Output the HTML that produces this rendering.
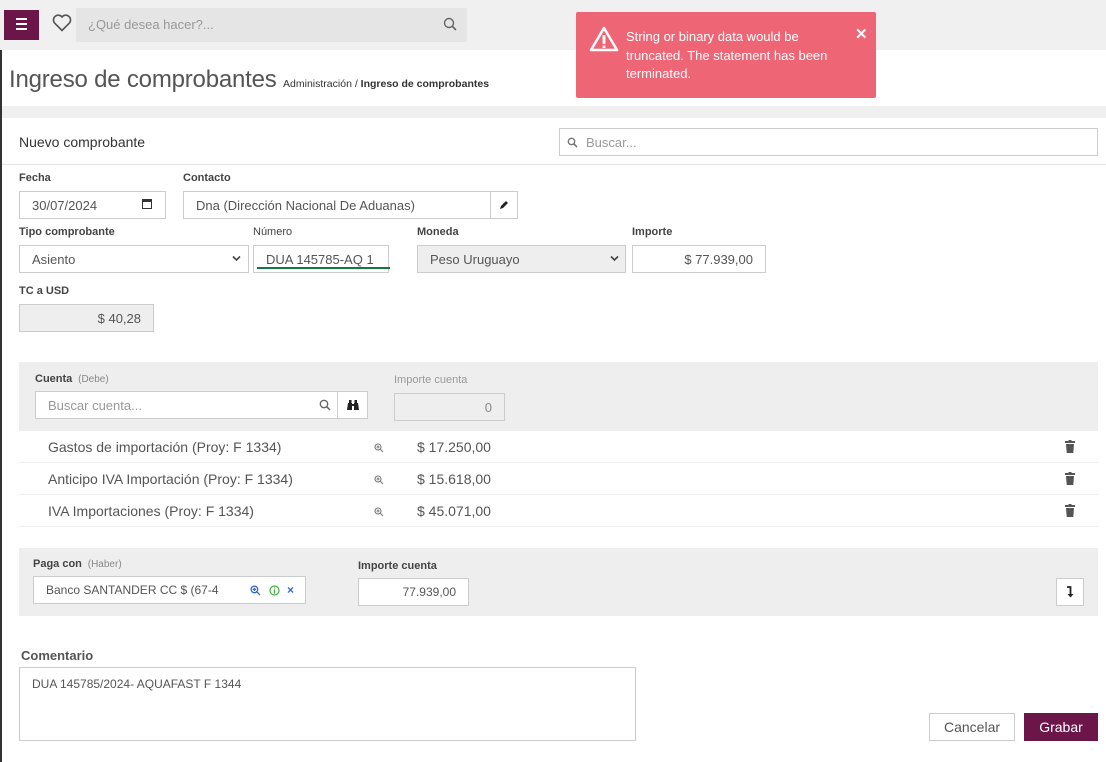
<!DOCTYPE html>
<html><head><meta charset="utf-8">
<style>
*{box-sizing:border-box;margin:0;padding:0}
body{width:1106px;height:762px;overflow:hidden;background:#fff;font-family:"Liberation Sans",sans-serif;color:#444;position:relative}
.a{position:absolute}
.lbl{position:absolute;font-size:11px;font-weight:bold;color:#444}
.inp{position:absolute;background:#fff;border:1px solid #ccc;font-size:13px;color:#555;display:flex;align-items:center;padding:0 12px}
.gray{background:#eee}
.row{position:absolute;left:19px;width:1079px;height:32px;background:#fff;border-bottom:1px solid #eee;font-size:14px;color:#555}
.row span{position:absolute;top:8px}
.trash{position:absolute;left:1046px;top:9px;width:10px;height:13px}
.zm{position:absolute;left:355px;top:12px}
</style></head><body>
<div class="a" style="left:0;top:0;width:1106px;height:50px;background:#f0f0f0"></div>
<div class="a" style="left:0;top:50px;width:2px;height:712px;background:#333"></div>
<div class="a" style="left:4px;top:10px;width:35px;height:30px;background:#6b1549"></div>
<div class="a" style="left:16px;top:18px;width:11px;height:2px;background:#fff;box-shadow:0 5px 0 #fff,0 10px 0 #fff"></div>
<svg class="a" style="left:52px;top:14px" width="20" height="18" viewBox="0 0 20 18"><path d="M10 16.5 L2.5 9 A4.5 4.5 0 0 1 10 3 A4.5 4.5 0 0 1 17.5 9 Z" fill="none" stroke="#555" stroke-width="1.6"/></svg>
<div class="a" style="left:76px;top:8px;width:391px;height:34px;background:#e5e5e5;font-size:13px;color:#999;padding:9px 0 0 12px">¿Qué desea hacer?...</div>
<svg class="a" style="left:443px;top:17px" width="15" height="15" viewBox="0 0 15 15"><circle cx="6" cy="6" r="4.5" fill="none" stroke="#666" stroke-width="1.4"/><path d="M9.5 9.5 L13 13" stroke="#666" stroke-width="1.6"/></svg>
<div class="a" style="left:9px;top:66px;font-size:24px;color:#555;white-space:nowrap;letter-spacing:-0.2px">Ingreso de comprobantes <span style="font-size:10.5px;color:#333;letter-spacing:0">Administración / <b>Ingreso de comprobantes</b></span></div>
<div class="a" style="left:2px;top:106px;width:1104px;height:12px;background:#f0f0f0"></div>

<div class="a" style="left:576px;top:12px;width:300px;height:86px;background:#ee6675;border-radius:2px;color:#fff;font-size:13px;line-height:18.5px;padding:16px 30px 0 50px">String or binary data would be truncated. The statement has been terminated.</div>
<svg class="a" style="left:589px;top:26px" width="30" height="26" viewBox="0 0 30 26"><path d="M15 2 L28 24 L2 24 Z" fill="none" stroke="#fff" stroke-width="2.5" stroke-linejoin="round"/><rect x="13.6" y="9" width="2.8" height="9" fill="#fff"/><rect x="13.6" y="19.5" width="2.8" height="2.5" fill="#fff"/></svg>
<div class="a" style="left:855px;top:25px;color:#fff;font-size:15px;font-weight:bold">✕</div>

<div class="a" style="left:19px;top:134px;font-size:14px;color:#333">Nuevo comprobante</div>
<div class="inp" style="left:559px;top:128px;width:539px;height:28px;color:#999;padding-left:26px">Buscar...</div>
<svg class="a" style="left:567px;top:137px" width="11" height="11" viewBox="0 0 11 11"><circle cx="4.5" cy="4.5" r="3.2" fill="none" stroke="#777" stroke-width="1.4"/><path d="M7 7 L10 10" stroke="#777" stroke-width="1.6"/></svg>
<div class="a" style="left:2px;top:164px;width:1104px;height:1px;background:#e5e5e5"></div>

<div class="lbl" style="left:19px;top:172px">Fecha</div>
<div class="inp" style="left:19px;top:191px;width:147px;height:28px">30/07/2024</div>
<div class="a" style="left:142px;top:199px;width:10px;height:10px;border:1.5px solid #333;border-top-width:3px"></div>
<div class="lbl" style="left:183px;top:172px">Contacto</div>
<div class="inp" style="left:183px;top:191px;width:308px;height:28px">Dna (Dirección Nacional De Aduanas)</div>
<div class="inp" style="left:490px;top:191px;width:28px;height:28px;padding:0;justify-content:center"><svg width="10" height="10" viewBox="0 0 10 10"><path d="M1 9 L2 6 L7 1 L9 3 L4 8 Z" fill="#222"/></svg></div>

<div class="lbl" style="left:19px;top:226px">Tipo comprobante</div>
<div class="inp" style="left:19px;top:245px;width:230px;height:28px">Asiento</div>
<svg class="a" style="left:232px;top:255px" width="9" height="7" viewBox="0 0 9 7"><path d="M1 1.5 L4.5 5 L8 1.5" fill="none" stroke="#444" stroke-width="1.6"/></svg>
<div class="lbl" style="left:253px;top:226px;font-weight:normal">Número</div>
<div class="inp" style="left:253px;top:245px;width:136px;height:28px">DUA 145785-AQ 1</div>
<div class="a" style="left:257px;top:267px;width:133px;height:2px;background:#137a3f"></div>
<div class="lbl" style="left:417px;top:226px">Moneda</div>
<div class="inp gray" style="left:417px;top:245px;width:209px;height:28px;color:#555">Peso Uruguayo</div>
<svg class="a" style="left:610px;top:255px" width="9" height="7" viewBox="0 0 9 7"><path d="M1 1.5 L4.5 5 L8 1.5" fill="none" stroke="#444" stroke-width="1.6"/></svg>
<div class="lbl" style="left:632px;top:226px">Importe</div>
<div class="inp" style="left:632px;top:245px;width:134px;height:28px;justify-content:flex-end">$ 77.939,00</div>

<div class="lbl" style="left:19px;top:285px">TC a USD</div>
<div class="inp gray" style="left:19px;top:304px;width:135px;height:28px;justify-content:flex-end">$ 40,28</div>

<div class="a" style="left:19px;top:362px;width:1079px;height:69px;background:#eee"></div>
<div class="lbl" style="left:35px;top:373px">Cuenta <span style="font-weight:normal;font-size:10px;color:#888">&nbsp;(Debe)</span></div>
<div class="inp" style="left:35px;top:391px;width:303px;height:28px;color:#999">Buscar cuenta...</div>
<svg class="a" style="left:319px;top:399px" width="12" height="12" viewBox="0 0 12 12"><circle cx="5" cy="5" r="3.7" fill="none" stroke="#666" stroke-width="1.3"/><path d="M7.8 7.8 L11 11" stroke="#666" stroke-width="1.5"/></svg>
<div class="inp" style="left:337px;top:391px;width:31px;height:28px;padding:0;justify-content:center"><svg width="12" height="10" viewBox="0 0 12 10"><rect x="2" y="0" width="2.5" height="3" fill="#222"/><rect x="7.5" y="0" width="2.5" height="3" fill="#222"/><path d="M1 3 H5 V10 H0 Z M7 3 H11 L12 10 H7 Z" fill="#222"/><rect x="5" y="4" width="2" height="2" fill="#222"/></svg></div>
<div class="a" style="left:394px;top:374px;font-size:11px;color:#999">Importe cuenta</div>
<div class="inp gray" style="left:394px;top:393px;width:111px;height:28px;justify-content:flex-end;color:#888">0</div>

<div class="row" style="top:431px"><span style="left:29px">Gastos de importación (Proy: F 1334)</span><svg class="zm" width="10" height="10" viewBox="0 0 10 10"><circle cx="4" cy="4" r="3" fill="none" stroke="#777" stroke-width="1.1"/><path d="M2.5 4 H5.5 M4 2.5 V5.5 M6.2 6.2 L9 9" stroke="#777" stroke-width="1.1"/></svg><span style="left:398px">$ 17.250,00</span><svg class="trash" viewBox="0 0 10 13"><rect x="0" y="1" width="10" height="2" fill="#555"/><rect x="3.5" y="0" width="3" height="1.5" fill="#555"/><path d="M1 4 H9 L8.3 13 H1.7 Z" fill="#555"/></svg></div>
<div class="row" style="top:463px"><span style="left:29px">Anticipo IVA Importación (Proy: F 1334)</span><svg class="zm" width="10" height="10" viewBox="0 0 10 10"><circle cx="4" cy="4" r="3" fill="none" stroke="#777" stroke-width="1.1"/><path d="M2.5 4 H5.5 M4 2.5 V5.5 M6.2 6.2 L9 9" stroke="#777" stroke-width="1.1"/></svg><span style="left:398px">$ 15.618,00</span><svg class="trash" viewBox="0 0 10 13"><rect x="0" y="1" width="10" height="2" fill="#555"/><rect x="3.5" y="0" width="3" height="1.5" fill="#555"/><path d="M1 4 H9 L8.3 13 H1.7 Z" fill="#555"/></svg></div>
<div class="row" style="top:495px"><span style="left:29px">IVA Importaciones (Proy: F 1334)</span><svg class="zm" width="10" height="10" viewBox="0 0 10 10"><circle cx="4" cy="4" r="3" fill="none" stroke="#777" stroke-width="1.1"/><path d="M2.5 4 H5.5 M4 2.5 V5.5 M6.2 6.2 L9 9" stroke="#777" stroke-width="1.1"/></svg><span style="left:398px">$ 45.071,00</span><svg class="trash" viewBox="0 0 10 13"><rect x="0" y="1" width="10" height="2" fill="#555"/><rect x="3.5" y="0" width="3" height="1.5" fill="#555"/><path d="M1 4 H9 L8.3 13 H1.7 Z" fill="#555"/></svg></div>

<div class="a" style="left:19px;top:548px;width:1079px;height:68px;background:#eee"></div>
<div class="lbl" style="left:33px;top:558px">Paga con <span style="font-weight:normal;font-size:10px;color:#888">&nbsp;(Haber)</span></div>
<div class="inp" style="left:33px;top:576px;width:273px;height:28px;font-size:12px">Banco SANTANDER CC $ (67-4</div>
<svg class="a" style="left:250px;top:585px" width="11" height="11" viewBox="0 0 10 10"><circle cx="4" cy="4" r="3" fill="none" stroke="#36c" stroke-width="1.2"/><path d="M2.5 4 H5.5 M4 2.5 V5.5 M6.2 6.2 L9 9" stroke="#36c" stroke-width="1.2"/></svg>
<svg class="a" style="left:269px;top:585px" width="11" height="11" viewBox="0 0 11 11"><circle cx="5.5" cy="5.5" r="4.5" fill="none" stroke="#4a4" stroke-width="1.2"/><path d="M5.5 4.5 V8.5 M5.5 2.5 V3.5" stroke="#4a4" stroke-width="1.4"/></svg>
<div class="a" style="left:287px;top:583px;font-size:12px;color:#36c;font-weight:bold">×</div>
<div class="lbl" style="left:358px;top:560px">Importe cuenta</div>
<div class="inp" style="left:358px;top:578px;width:111px;height:28px;justify-content:flex-end;font-size:12px">77.939,00</div>
<div class="inp" style="left:1056px;top:578px;width:28px;height:28px;padding:0;justify-content:center"><svg width="8" height="12" viewBox="0 0 8 12"><path d="M1 1 H4.5 V9" fill="none" stroke="#222" stroke-width="1.8"/><path d="M1.5 8 L4.5 11.5 L7.5 8 Z" fill="#222"/></svg></div>

<div class="a" style="left:21px;top:648px;font-size:13px;font-weight:bold;color:#555">Comentario</div>
<div class="inp" style="left:19px;top:667px;width:617px;height:74px;align-items:flex-start;padding-top:9px;font-size:12px">DUA 145785/2024- AQUAFAST F 1344</div>
<div class="inp" style="left:929px;top:713px;width:86px;height:28px;justify-content:center;font-size:14px">Cancelar</div>
<div class="a" style="left:1024px;top:713px;width:74px;height:28px;background:#6b1549;color:#fff;font-size:14px;text-align:center;line-height:28px">Grabar</div>
</body></html>
